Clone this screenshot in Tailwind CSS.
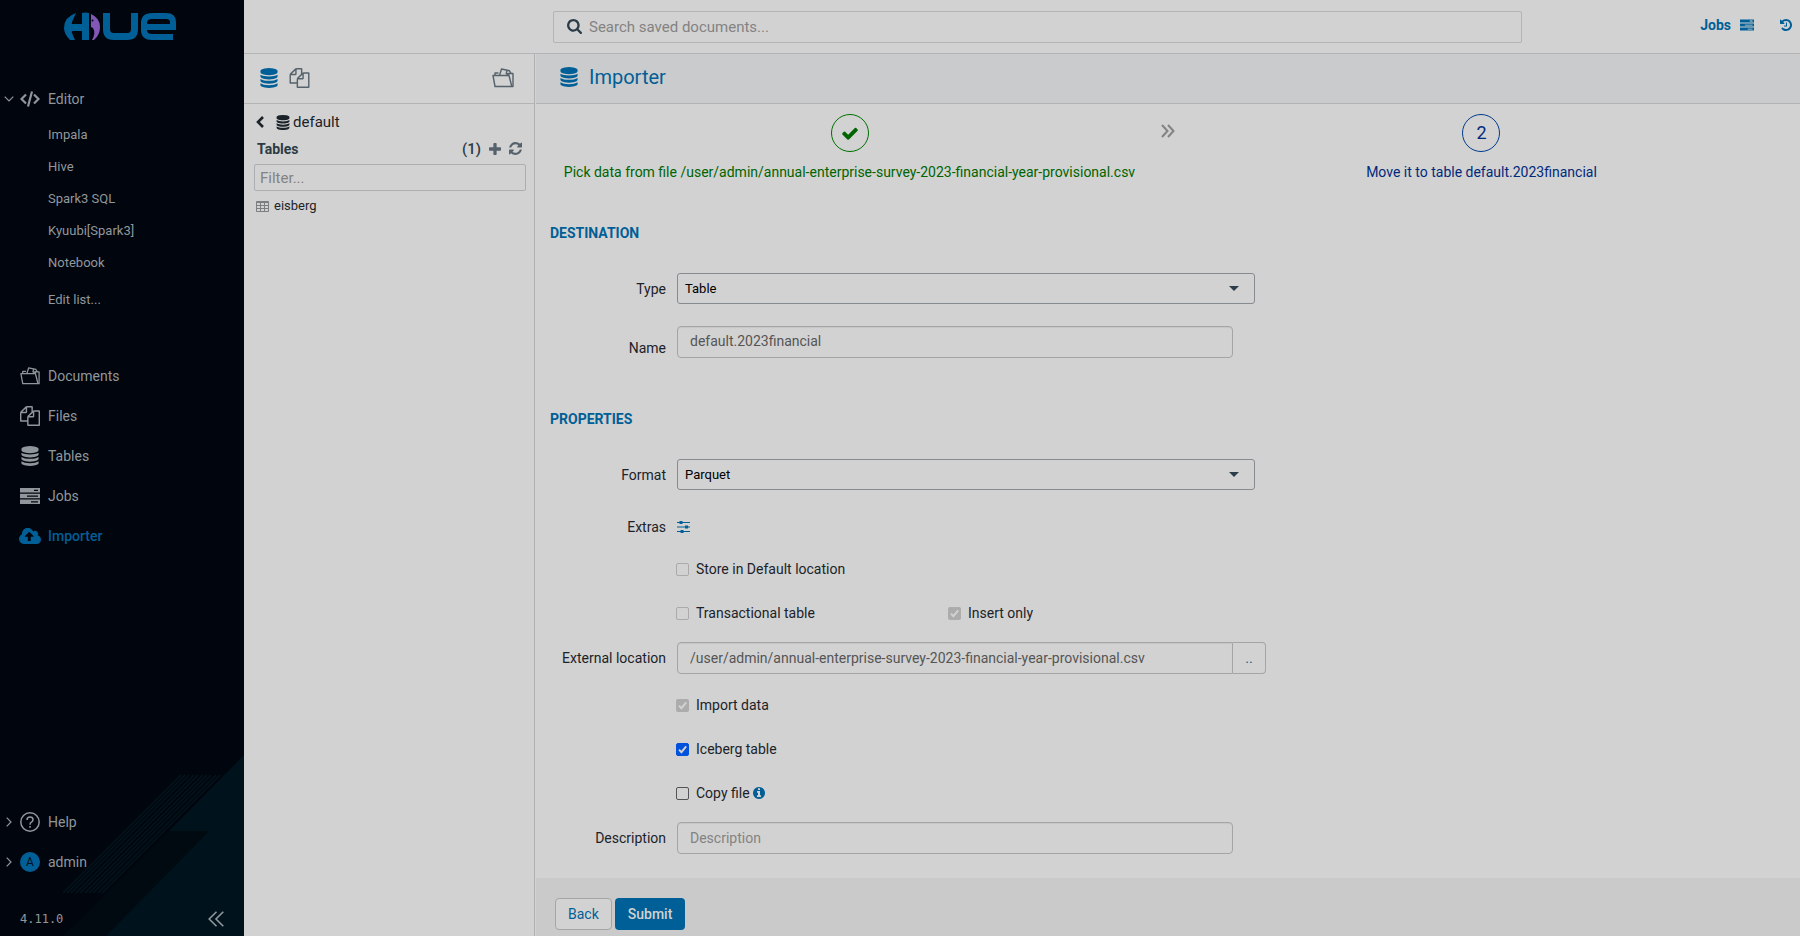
<!DOCTYPE html>
<html lang="en">
  <head>
    <meta charset="UTF-8" />
    <meta name="viewport" content="width=device-width, initial-scale=1.0" />
    <title>Hue - Importer</title>
    <script src="https://cdn.jsdelivr.net/npm/@tailwindcss/browser@4"></script>
  </head>
  <body class="min-h-screen flex bg-[#d2d2d2] font-[Roboto,sans-serif] text-sm leading-5 text-[#1b2329]">
    <!-- Icon sprite -->
    <svg class="hidden" aria-hidden="true">
      <symbol id="database" viewBox="64 0 1536 1792"><path d="M832 768q237 0 443-43t325-127v170q0 69-103 128t-280 93.500-385 34.500-385-34.500-280-93.500-103-128v-170q119 84 325 127t443 43zm0 768q237 0 443-43t325-127v170q0 69-103 128t-280 93.500-385 34.500-385-34.500-280-93.500-103-128v-170q119 84 325 127t443 43zm0-384q237 0 443-43t325-127v170q0 69-103 128t-280 93.500-385 34.500-385-34.500-280-93.500-103-128v-170q119 84 325 127t443 43zm0-1152q208 0 385 34.500t280 93.500 103 128v128q0 69-103 128t-280 93.500-385 34.500-385-34.500-280-93.500-103-128v-128q0-69 103-128t280-93.500 385-34.500z" /></symbol>
      <symbol id="files" viewBox="0 0 1792 1792"><path d="M1696 384q40 0 68 28t28 68v1216q0 40-28 68t-68 28h-960q-40 0-68-28t-28-68v-288h-544q-40 0-68-28t-28-68v-672q0-40 20-88t48-76l408-408q28-28 76-48t88-20h416q40 0 68 28t28 68v328q68-40 128-40h416zm-544 213l-299 299h299v-299zm-640-384l-299 299h299v-299zm196 647l316-316v-416h-384v416q0 40-28 68t-68 28h-416v640h512v-256q0-40 20-88t48-76zm956 804v-1152h-384v416q0 40-28 68t-68 28h-416v640h896z" /></symbol>
      <symbol id="folder" viewBox="0 0 22 20">
        <g fill="none" stroke="currentColor" stroke-width="1.400" stroke-linejoin="round">
          <path d="M3 18.500 1 7.500h13.500l2-2h4.500v13z" />
          <path d="M14.500 7.500h2.500l2.800 11" />
          <path d="M3 7.500V5h3.500M7.500 7.500l2-6.500 8 1.800 1.500 2.700M15 2.500l-.8 3 3.500.5" />
        </g>
      </symbol>
      <symbol id="server" viewBox="0 0 20 16"><path fill-rule="evenodd" d="M0 0h20v4.500H0zM14 1.700v1.200h4V1.700zM0 5.800h20v4.500H0zM7 7.500v1.200h11V7.500zM0 11.500h20V16H0zM11 13.200v1.200h7v-1.200z" /></symbol>
      <symbol id="cloud" viewBox="-64 160 1920 1440"><path d="M1216 864q0-14-9-23l-352-352q-9-9-23-9t-23 9l-351 351q-10 12-10 24 0 14 9 23t23 9h224v352q0 13 9.500 22.500t22.500 9.500h192q13 0 22.500-9.500t9.500-22.500v-352h224q13 0 22.500-9.500t9.500-22.500zm640 288q0 159-112.500 271.500t-271.500 112.500h-1088q-185 0-316.500-131.500t-131.500-316.500q0-130 70-240t188-165q-2-30-2-43 0-212 150-362t362-150q156 0 285.500 87t188.500 231q71-62 166-62 106 0 181 75t75 181q0 76-41 138 130 31 213.500 135.500t83.500 238.500z" /></symbol>
      <symbol id="search" viewBox="64 128 1664 1664"><path d="M1216 832q0-185-131.500-316.500t-316.500-131.500-316.500 131.500-131.500 316.500 131.500 316.500 316.500 131.500 316.500-131.500 131.500-316.500zm512 832q0 52-38 90t-90 38q-54 0-90-38l-343-342q-179 124-399 124-143 0-273.500-55.500t-225-150-150-225-55.500-273.500 55.500-273.500 150-225 225-150 273.500-55.500 273.500 55.500 225 150 150 225 55.500 273.500q0 220-124 399l343 343q37 37 37 90z" /></symbol>
      <symbol id="check" viewBox="121 256 1550 1280"><path d="M1671 566q0 40-28 68l-724 724-136 136q-28 28-68 28t-68-28l-136-136-362-362q-28-28-28-68t28-68l136-136q28-28 68-28t68 28l294 295 656-657q28-28 68-28t68 28l136 136q28 28 28 68z" /></symbol>
      <symbol id="plus" viewBox="192 128 1408 1408"><path d="M1600 736v192q0 40-28 68t-68 28h-416v416q0 40-28 68t-68 28h-192q-40 0-68-28t-28-68v-416h-416q-40 0-68-28t-28-68v-192q0-40 28-68t68-28h416v-416q0-40 28-68t68-28h192q40 0 68 28t28 68v416h416q40 0 68 28t28 68z" /></symbol>
      <symbol id="refresh" viewBox="128 128 1536 1536"><path d="M1639 1056q0 5-1 7-64 268-268 434.500t-478 166.500q-146 0-282.500-55t-243.500-157l-129 129q-19 19-45 19t-45-19-19-45v-448q0-26 19-45t45-19h448q26 0 45 19t19 45-19 45l-137 137q71 66 161 102t187 36q134 0 250-65t186-179q11-17 53-117 8-23 30-23h192q13 0 22.500 9.500t9.500 22.500zm25-800v448q0 26-19 45t-45 19h-448q-26 0-45-19t-19-45 19-45l138-138q-148-137-349-137-134 0-250 65t-186 179q-11 17-53 117-8 23-30 23h-199q-13 0-22.500-9.500t-9.500-22.500v-7q65-268 270-434.500t480-166.500q146 0 284 55.500t245 156.500l130-129q19-19 45-19t45 19 19 45z" /></symbol>
      <symbol id="history" viewBox="128 128 1536 1536"><path d="M1664 896q0 156-61 298t-164 245-245 164-298 61q-172 0-327-72.500t-264-204.500q-7-10-6.500-22.500t8.500-20.500l137-138q10-9 25-9 16 2 23 12 73 95 179 147t225 52q104 0 198.500-40.500t163.500-109.500 109.500-163.500 40.500-198.500-40.500-198.500-109.500-163.500-163.500-109.500-198.500-40.500q-98 0-188 35.500t-160 101.500l137 138q31 30 14 69-17 40-59 40h-448q-26 0-45-19t-19-45v-448q0-42 40-59 39-17 69 14l130 129q107-101 244.500-156.500t284.500-55.500q156 0 298 61t245 164 164 245 61 298zm-640-288v448q0 14-9 23t-23 9h-320q-14 0-23-9t-9-23v-64q0-14 9-23t23-9h224v-352q0-14 9-23t23-9h64q14 0 23 9t9 23z" /></symbol>
      <symbol id="info" viewBox="128 128 1536 1536"><path d="M1152 1376v-160q0-14-9-23t-23-9h-96v-512q0-14-9-23t-23-9h-320q-14 0-23 9t-9 23v160q0 14 9 23t23 9h96v320h-96q-14 0-23 9t-9 23v160q0 14 9 23t23 9h448q14 0 23-9t9-23zm-128-896v-160q0-14-9-23t-23-9h-192q-14 0-23 9t-9 23v160q0 14 9 23t23 9h192q14 0 23-9t9-23zm640 416q0 209-103 385.500t-279.500 279.500-385.500 103-385.500-103-279.500-279.500-103-385.500 103-385.500 279.500-279.500 385.500-103 385.500 103 279.500 279.500 103 385.500z" /></symbol>
      <symbol id="tick" viewBox="0 0 13 13"><path d="M3 6.700 5.400 9.200 10.200 3.300" fill="none" stroke="currentColor" stroke-width="1.900" /></symbol>
      <symbol id="caret" viewBox="0 0 10 5"><path d="M0 0h10L5 5z" /></symbol>
      <symbol id="angle" viewBox="0 0 6 10"><path d="m.7.7 4.300 4.300L.7 9.300" fill="none" stroke="currentColor" stroke-width="1.200" /></symbol>
    </svg>

    <!-- Sidebar -->
    <aside class="relative w-[244px] shrink-0 flex flex-col bg-[#01050d] text-[#90979c] overflow-hidden">
      <svg class="absolute right-0 bottom-0 w-[182px] h-[181px]" viewBox="62 755 182 181" aria-hidden="true">
        <path fill="#000a10" d="M169 831h40L106 936H63z" />
        <path fill="#00121b" d="M244 755v181H106l103-105h-40z" />
        <path stroke="#02141c" stroke-width="1.500" d="M181 775 63 893M185 775 67 893M189 775 71 893M194 775 76 893M198 775 80 893M203 775 85 893M207 775 89 893M211 775 93 893M216 775 98 893M220 775 102 893" />
      </svg>

      <div class="relative flex-1 flex flex-col">
        <a href="#" aria-label="Hue" class="block h-12 pl-16 pt-3">
          <svg class="w-28 h-7" viewBox="0 0 112 28" aria-hidden="true">
            <path fill="#005f96" d="M12 1 8 10q-1 2 1 2h9V1q3-1 7 0v27h-7v-9H9q-2 0-1 2l3 7H6Q0 22 0 16 0 5 12 1z" />
            <path fill="#8357b8" d="M27 2q9 4 9 13 0 8-6 13h-2q4-7 1-12l-2-1z" />
            <circle fill="#01050d" cx="28.500" cy="8.500" r="1" />
            <g fill="none" stroke="#005f96" stroke-width="7">
              <path d="M42.500 1v16q0 7.500 7 7.500h14q7 0 7-7.500V1" />
              <path stroke-width="6" d="M109 25H88q-8 0-8-7v-7q0-7 8-7h14q7 0 7 6v5H83" />
            </g>
          </svg>
        </a>

        <nav class="flex flex-col">
          <a href="#" class="mt-[31px] h-10 flex items-center pl-1">
            <svg class="w-[10px] h-[6px] mr-[6px]" viewBox="0 0 10 6" fill="none" stroke="currentColor" stroke-width="1.200"><path d="m.7.7 4.300 4.300L9.300.7" /></svg>
            <svg class="w-5 h-4 mr-2" viewBox="0 0 20 16" fill="none" stroke="currentColor" stroke-width="2.200"><path d="M6 3.500 1.500 8 6 12.500M14 3.500 18.500 8 14 12.500M12 .5 8 15.500" /></svg>
            Editor
          </a>
          <a href="#" class="h-8 flex items-center pl-12 text-[13px]">Impala</a>
          <a href="#" class="h-8 flex items-center pl-12 text-[13px]">Hive</a>
          <a href="#" class="h-8 flex items-center pl-12 text-[13px]">Spark3 SQL</a>
          <a href="#" class="h-8 flex items-center pl-12 text-[13px]">Kyuubi[Spark3]</a>
          <a href="#" class="h-8 flex items-center pl-12 text-[13px]">Notebook</a>
          <a href="#" class="mt-[5px] h-8 flex items-center pl-12 text-[13px]">Edit list...</a>

          <a href="#" class="mt-10 h-10 flex items-center gap-2 pl-5"><svg class="w-5 h-5"><use href="#folder" /></svg>Documents</a>
          <a href="#" class="h-10 flex items-center gap-2 pl-5"><svg class="w-5 h-5 fill-current"><use href="#files" /></svg>Files</a>
          <a href="#" class="h-10 flex items-center gap-2 pl-5"><svg class="w-5 h-5 fill-current"><use href="#database" /></svg>Tables</a>
          <a href="#" class="h-10 flex items-center gap-2 pl-5"><svg class="w-5 h-4 fill-current"><use href="#server" /></svg>Jobs</a>
          <a href="#" class="h-10 flex items-center gap-[7px] pl-[19px] font-medium text-[#005f96]"><svg class="w-[22px] h-[17px] fill-current"><use href="#cloud" /></svg>Importer</a>
        </nav>

        <div class="mt-auto">
          <a href="#" class="h-10 flex items-center pl-[6px]">
            <svg class="w-[6px] h-[10px] mr-2"><use href="#angle" /></svg>
            <svg class="w-5 h-5 mr-2" viewBox="0 0 20 20" fill="none" stroke="currentColor" stroke-width="1.500"><circle cx="10" cy="10" r="9.200" /><path d="M7 8q0-3 3-3t3 2.700q0 1.500-1.600 2.500-1.400.8-1.400 2.500M10 14v1.800" /></svg>
            Help
          </a>
          <a href="#" class="h-10 flex items-center pl-[6px]">
            <svg class="w-[6px] h-[10px] mr-2"><use href="#angle" /></svg>
            <span class="w-5 h-5 mr-2 rounded-full bg-[#005f96] text-[#01121f] text-xs leading-5 text-center">A</span>
            admin
          </a>
          <div class="mt-5 h-[34px] flex items-center justify-between pl-5 pr-5">
            <span class="font-['DejaVu_Sans_Mono',monospace] text-xs">4.11.0</span>
            <button type="button" aria-label="Collapse">
              <svg class="w-4 h-4" viewBox="0 0 16 16" fill="none" stroke="currentColor" stroke-width="1.600"><path d="M8.500.7 1.200 8l7.300 7.300M15.300.7 8 8l7.300 7.300" /></svg>
            </button>
          </div>
        </div>
      </div>
    </aside>

    <div class="flex-1 min-w-0 flex flex-col">
      <!-- Top bar -->
      <header class="h-[54px] border-b border-[#b3b4b6] flex items-center pr-2">
        <div class="flex-1 flex justify-between items-center pl-[309px]">
          <label class="w-[969px] h-8 flex items-center gap-[7px] border border-[#b3b4b6] rounded-xs pl-[13px] text-[#2b3d48]">
            <svg class="w-[15px] h-[15px] fill-current"><use href="#search" /></svg>
            <input type="text" aria-label="Search" placeholder="Search saved documents..." class="flex-1 outline-none text-[15px] placeholder:text-[#838383]" />
          </label>
          <div class="flex items-center mb-1 text-[#005f96]">
            <a href="#" class="flex items-center gap-[9px] font-bold">Jobs <svg class="w-[14px] h-3 fill-current"><use href="#server" /></svg></a>
            <button type="button" aria-label="History" class="ml-[26px]"><svg class="w-3 h-3 fill-current"><use href="#history" /></svg></button>
          </div>
        </div>
      </header>

      <div class="flex-1 flex">
        <!-- Assist panel -->
        <section class="w-[291px] shrink-0 border-r border-[#b0b1b3]">
          <div class="h-[50px] flex items-center pl-4 pr-5 pb-[2px] border-b border-[#b3b4b6] text-[#56626b]">
            <button type="button" aria-label="Databases" class="text-[#005f96]"><svg class="w-[18px] h-5 fill-current"><use href="#database" /></svg></button>
            <button type="button" aria-label="Files" class="ml-[11px]"><svg class="w-[21px] h-5 fill-current"><use href="#files" /></svg></button>
            <button type="button" aria-label="Documents" class="ml-auto"><svg class="w-[22px] h-5"><use href="#folder" /></svg></button>
          </div>
          <div class="pl-[10px] pr-2 pt-[7px]">
            <div class="flex items-center pl-[2px] text-[15px] h-[22px]">
              <button type="button" aria-label="Back to databases" class="mr-3"><svg class="w-2 h-3" viewBox="0 0 8 12" fill="none" stroke="currentColor" stroke-width="2.600"><path d="M7 1 2 6l5 5" /></svg></button>
              <svg class="w-[14px] h-[15px] fill-current mr-[3px]"><use href="#database" /></svg>
              <a href="#">default</a>
            </div>
            <div class="flex items-center h-[31px] pl-[3px] pr-1 text-[#2b3b45] font-bold">
              <h3>Tables</h3>
              <span class="ml-auto font-medium text-[15px]">(1)</span>
              <button type="button" aria-label="Create table" class="ml-2 text-[#56626b]"><svg class="w-3 h-3 fill-current"><use href="#plus" /></svg></button>
              <button type="button" aria-label="Refresh" class="ml-2 text-[#56626b]"><svg class="w-[13px] h-[13px] fill-current"><use href="#refresh" /></svg></button>
            </div>
            <input type="text" aria-label="Filter" placeholder="Filter..." class="block w-full h-[27px] pl-[5px] border border-[#acaeb0] rounded-xs outline-none text-[15px] placeholder:text-[#838383]" />
            <a href="#" class="mt-[5px] h-5 flex items-center gap-[5px] pl-[2px] text-[13px]">
              <svg class="w-[13px] h-[11px] text-[#7c7f81]" viewBox="0 0 13 11" fill="none" stroke="currentColor"><path d="M.5.5h12v10H.5zM.5 1.500h12M.5 4.500h12M.5 7.500h12M4.500.5v10M8.500.5v10" /></svg>
              eisberg
            </a>
          </div>
        </section>

        <!-- Importer -->
        <main class="flex-1 min-w-0 flex flex-col ml-[1px]">
          <h1 class="h-[50px] flex items-center gap-[11px] pl-6 pb-1 bg-[#cacbcd] border-b border-[#b3b4b6] text-[20px] text-[#005f96]">
            <svg class="w-[18px] h-5 fill-current"><use href="#database" /></svg>
            Importer
          </h1>

          <div class="grid grid-cols-[600fr_38fr_590fr] pt-[10px] pl-[14px] pr-6 text-center">
            <a href="#" class="text-[#006400]">
              <span class="w-[38px] h-[38px] mx-auto mb-[10px] rounded-full border border-[#007000] flex items-center justify-center"><svg class="w-4 h-[13px] fill-current"><use href="#check" /></svg></span>
              Pick data from file /user/admin/annual-enterprise-survey-2023-financial-year-provisional.csv
            </a>
            <svg class="w-[14px] h-[14px] mx-auto mt-[10px] text-[#838383]" viewBox="0 0 14 14" fill="none" stroke="currentColor" stroke-width="2"><path d="m1 1 5.500 6L1 13M7 1l5.500 6L7 13" /></svg>
            <a href="#" class="text-[#00297c]">
              <span class="w-[38px] h-[38px] mx-auto mb-[10px] rounded-full border border-[#003c8c] flex items-center justify-center text-lg">2</span>
              Move it to table default.2023financial
            </a>
          </div>

          <form class="flex-1 flex flex-col">
            <h2 class="mt-[41px] pl-[14px] font-bold text-[#005f96]">DESTINATION</h2>

            <div class="mt-[30px] flex items-center gap-[11px]">
              <label for="type" class="w-[130px] text-right">Type</label>
              <div class="relative w-[578px]">
                <select id="type" class="block w-full h-[31px] pl-[7px] appearance-none border border-[#868b8f] rounded-[3px] text-[13px] text-black"><option>Table</option></select>
                <svg class="absolute right-4 top-[13px] w-[10px] h-[5px] fill-[#2b3d48] pointer-events-none"><use href="#caret" /></svg>
              </div>
            </div>
            <div class="mt-[22px] flex items-end gap-[11px]">
              <label for="name" class="w-[130px] text-right">Name</label>
              <input id="name" type="text" value="default.2023financial" class="w-[556px] h-8 px-3 pb-[2px] border border-[#a5a5a5] rounded shadow-[inset_0_1px_1px_#00000010] text-[#555]" />
            </div>

            <h2 class="mt-[51px] pl-[14px] font-bold text-[#005f96]">PROPERTIES</h2>

            <div class="mt-[30px] flex items-center gap-[11px]">
              <label for="format" class="w-[130px] text-right">Format</label>
              <div class="relative w-[578px]">
                <select id="format" class="block w-full h-[31px] pl-[7px] appearance-none border border-[#868b8f] rounded-[3px] text-[13px] text-black"><option>Parquet</option></select>
                <svg class="absolute right-4 top-[13px] w-[10px] h-[5px] fill-[#2b3d48] pointer-events-none"><use href="#caret" /></svg>
              </div>
            </div>
            <div class="mt-[27px] flex items-center gap-[11px]">
              <span class="w-[130px] text-right">Extras</span>
              <button type="button" aria-label="Extras" class="text-[#005f96]">
                <svg class="w-[13px] h-3" viewBox="0 0 13 12" fill="none" stroke="currentColor"><path d="M0 1.500h13M0 6h13M0 10.500h13" stroke-width="1.200" /><path d="M2.500 1.500h3M8 6h3M3.500 10.500h3" stroke-width="3" /></svg>
              </button>
            </div>

            <label class="mt-[22px] ml-[140px] w-fit flex items-center gap-[7px]">
              <input type="checkbox" disabled class="appearance-none w-[13px] h-[13px] border border-[#aaa] rounded-[2px]" />
              Store in Default location
            </label>
            <div class="mt-6 ml-[140px] flex">
              <label class="w-[272px] flex items-center gap-[7px]">
                <input type="checkbox" disabled class="appearance-none w-[13px] h-[13px] border border-[#aaa] rounded-[2px]" />
                Transactional table
              </label>
              <label class="flex items-center gap-[7px]">
                <span class="grid text-[#d2d2d2]">
                  <input type="checkbox" checked disabled class="col-start-1 row-start-1 appearance-none w-[13px] h-[13px] rounded-[2px] bg-[#acacac]" />
                  <svg class="col-start-1 row-start-1 w-[13px] h-[13px]"><use href="#tick" /></svg>
                </span>
                Insert only
              </label>
            </div>
            <div class="mt-[19px] flex items-center">
              <label for="location" class="w-[130px] mr-[11px] text-right">External location</label>
              <input id="location" type="text" value="/user/admin/annual-enterprise-survey-2023-financial-year-provisional.csv" class="w-[556px] h-8 px-3 border border-[#a5a5a5] rounded-l shadow-[inset_0_1px_1px_#00000010] text-[#555]" />
              <button type="button" class="w-[33px] h-8 border border-l-0 border-[#a5a5a5] rounded-r text-[#005f96]">..</button>
            </div>
            <label class="mt-[21px] ml-[140px] w-fit flex items-center gap-[7px]">
              <span class="grid text-[#d2d2d2]">
                <input type="checkbox" checked disabled class="col-start-1 row-start-1 appearance-none w-[13px] h-[13px] rounded-[2px] bg-[#acacac]" />
                <svg class="col-start-1 row-start-1 w-[13px] h-[13px]"><use href="#tick" /></svg>
              </span>
              Import data
            </label>
            <label class="mt-6 ml-[140px] w-fit flex items-center gap-[7px]">
              <span class="grid text-[#d2d2d2]">
                <input type="checkbox" checked class="peer col-start-1 row-start-1 appearance-none w-[13px] h-[13px] rounded-[2px] border border-[#555] checked:border-[#0051db] checked:bg-[#0051db]" />
                <svg class="col-start-1 row-start-1 w-[13px] h-[13px] invisible peer-checked:visible pointer-events-none"><use href="#tick" /></svg>
              </span>
              Iceberg table
            </label>
            <label class="mt-6 ml-[140px] w-fit flex items-center">
              <span class="grid text-[#d2d2d2] mr-[7px]">
                <input type="checkbox" class="peer col-start-1 row-start-1 appearance-none w-[13px] h-[13px] rounded-[2px] border border-[#555] checked:border-[#0051db] checked:bg-[#0051db]" />
                <svg class="col-start-1 row-start-1 w-[13px] h-[13px] invisible peer-checked:visible pointer-events-none"><use href="#tick" /></svg>
              </span>
              Copy file
              <svg class="ml-[3px] w-3 h-3 fill-[#005f96]"><use href="#info" /></svg>
            </label>
            <div class="mt-[19px] mb-6 flex items-center gap-[11px]">
              <label for="description" class="w-[130px] text-right">Description</label>
              <input id="description" type="text" placeholder="Description" class="w-[556px] h-8 px-3 border border-[#a5a5a5] rounded shadow-[inset_0_1px_1px_#00000010] text-[#555] placeholder:text-[#838383]" />
            </div>

            <div class="mt-auto h-[58px] flex items-end gap-[3px] pl-[19px] pb-[6px] bg-[#cacaca]">
              <button type="button" class="h-8 px-3 border border-[#a5a5a5] rounded bg-[#d2d2d2] text-[#005f96]">Back</button>
              <button type="submit" class="h-8 px-[13px] rounded bg-[#005f96] font-medium text-[#d2d2d2]">Submit</button>
            </div>
          </form>
        </main>
      </div>
    </div>
  </body>
</html>
